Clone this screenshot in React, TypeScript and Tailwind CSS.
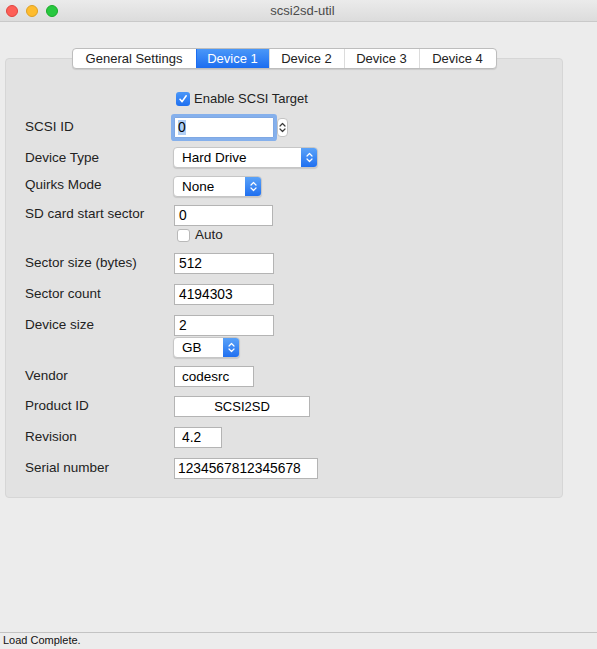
import React from "react";

const font = { fontFamily: '"Liberation Sans", Arial, sans-serif' };

function UpDown({ color = "white", className = "" }: { color?: string; className?: string }) {
  return (
    <svg width="7" height="11" viewBox="0 0 7 11" className={className} fill="none">
      <path d="M1 4 L3.5 1.5 L6 4" stroke={color} strokeWidth="1.2" strokeLinecap="round" strokeLinejoin="round" />
      <path d="M1 7 L3.5 9.5 L6 7" stroke={color} strokeWidth="1.2" strokeLinecap="round" strokeLinejoin="round" />
    </svg>
  );
}

function Check() {
  return (
    <svg width="10" height="10" viewBox="0 0 10 10" fill="none">
      <path d="M2 5.3 L4.1 7.6 L8.2 1.8" stroke="white" strokeWidth="1.6" strokeLinecap="round" strokeLinejoin="round" />
    </svg>
  );
}

function Label({ children, mt = "mt-[2px]" }: { children: React.ReactNode; mt?: string }) {
  return <div className={`w-[149px] shrink-0 text-[13.5px] leading-[16px] text-[#222] ${mt}`}>{children}</div>;
}

function TextBox({
  value,
  w,
  pl = "pl-[4px]",
  center = false,
  size = "text-[13px]",
}: {
  value: string;
  w: string;
  pl?: string;
  center?: boolean;
  size?: string;
}) {
  return (
    <div
      className={`${w} h-[21px] bg-white border border-[#b4b4b4] ${size} leading-[19px] text-black whitespace-nowrap overflow-hidden ${
        center ? "text-center" : pl
      }`}
    >
      {value}
    </div>
  );
}

function Select({ value, w }: { value: string; w: string }) {
  return (
    <div
      className={`${w} -ml-px h-[21px] flex rounded-[4px] bg-white border border-[#c6c6c6] shadow-[0_1px_1px_rgba(0,0,0,0.12)] overflow-hidden`}
    >
      <div className="flex-1 pl-[8px] text-[13.5px] leading-[19px] text-black">{value}</div>
      <div className="w-[16px] flex items-center justify-center bg-gradient-to-b from-[#5aa2f8] to-[#1f6ff0]">
        <UpDown />
      </div>
    </div>
  );
}

function Row({ label, mt, children, labelMt }: { label: string; mt: string; children: React.ReactNode; labelMt?: string }) {
  return (
    <div className={`flex items-start ${mt}`}>
      <Label mt={labelMt}>{label}</Label>
      <div className="flex flex-col">{children}</div>
    </div>
  );
}

const tabs = [
  { name: "General Settings", w: "w-[123px]" },
  { name: "Device 1", w: "w-[73px]", active: true },
  { name: "Device 2", w: "w-[75px]" },
  { name: "Device 3", w: "w-[75px]" },
  { name: "Device 4", w: "w-[77px]" },
];

const num = "text-[13.8px]";

export default function App() {
  return (
    <div className="w-[597px] h-[649px] flex flex-col bg-[#ececec] overflow-hidden" style={font}>
      {/* title bar */}
      <div className="h-[22px] shrink-0 flex items-center bg-gradient-to-b from-[#ebebeb] to-[#dcdcdc] border-b border-[#c9c9c9] relative">
        <div className="flex items-center gap-[8px] pl-[6px]">
          <div className="w-[12px] h-[12px] rounded-full bg-[#fd5f57] border border-[#e0443e]" />
          <div className="w-[12px] h-[12px] rounded-full bg-[#febc2e] border border-[#dea123]" />
          <div className="w-[12px] h-[12px] rounded-full bg-[#28c840] border border-[#1aab29]" />
        </div>
        <div className="flex-1 text-center pr-[50px] text-[13px] text-[#4a4a4a]">scsi2sd-util</div>
      </div>

      {/* main area */}
      <div className="flex-1 flex flex-col pt-[26px]">
        <div className="flex justify-center w-[558px] ml-[5px] relative z-10">
          <div className="flex h-[21px] rounded-[4px] border border-[#bdbdbd] bg-white shadow-[0_1px_1px_rgba(0,0,0,0.10)] overflow-hidden">
            {tabs.map((t, i) => (
              <div
                key={t.name}
                className={`${t.w} flex items-center justify-center text-[13px] ${
                  i > 0 ? "border-l border-[#dcdcdc]" : ""
                } ${t.active ? "bg-gradient-to-b from-[#4a97f8] to-[#1c6df0] text-white border-l-[#1c6df0]" : "text-[#222]"}`}
              >
                {t.name}
              </div>
            ))}
          </div>
        </div>

        <div className="w-[558px] ml-[5px] -mt-[11px] rounded-[4px] bg-[#e2e2e2] border border-[#d6d6d6] pl-[19px] pt-[33px] pb-[18px]">
          {/* enable checkbox */}
          <div className="flex items-center h-[14px] pl-[151px]">
            <div className="w-[14px] h-[14px] rounded-[3px] bg-gradient-to-b from-[#4b97f8] to-[#1d6ff0] flex items-center justify-center">
              <Check />
            </div>
            <span className="ml-[4px] text-[13px] text-[#222]">Enable SCSI Target</span>
          </div>

          <Row label="SCSI ID" mt="mt-[11px]">
            <div className="flex items-start">
              <div className="w-[100px] h-[21px] bg-white border border-[#7fa8e3] rounded-[1px] shadow-[0_0_0_3px_#85b0ec] pl-[3px] text-[13.8px] leading-[19px] text-black">
                <span className="bg-[#b1cff5]">0</span>
              </div>
              <div className="ml-[3px] mt-[1px] w-[11px] h-[19px] rounded-[4px] bg-white border border-[#c4c4c4] flex items-center justify-center">
                <UpDown color="#3a3a3a" />
              </div>
            </div>
          </Row>

          <Row label="Device Type" mt="mt-[9px]" labelMt="mt-[3px]">
            <Select value="Hard Drive" w="w-[145px]" />
          </Row>

          <Row label="Quirks Mode" mt="mt-[8px]" labelMt="mt-[1px]">
            <Select value="None" w="w-[89px]" />
          </Row>

          <Row label="SD card start sector" mt="mt-[8px]" labelMt="mt-[1px]">
            <TextBox value="0" w="w-[99px]" size={num} />
            <div className="flex items-center mt-[2px] ml-[3px] h-[14px]">
              <div className="w-[13px] h-[13px] rounded-[3px] bg-white border border-[#b9b9b9]" />
              <span className="ml-[5px] text-[13.5px] text-[#222]">Auto</span>
            </div>
          </Row>

          <Row label="Sector size (bytes)" mt="mt-[11px]">
            <TextBox value="512" w="w-[100px]" size={num} />
          </Row>

          <Row label="Sector count" mt="mt-[10px]">
            <TextBox value="4194303" w="w-[100px]" size={num} />
          </Row>

          <Row label="Device size" mt="mt-[10px]">
            <TextBox value="2" w="w-[100px]" size={num} />
            <div className="mt-[1px]">
              <Select value="GB" w="w-[67px]" />
            </div>
          </Row>

          <Row label="Vendor" mt="mt-[8px]">
            <TextBox value="codesrc" w="w-[80px]" pl="pl-[7px]" size="text-[13.5px]" />
          </Row>

          <Row label="Product ID" mt="mt-[9px]">
            <TextBox value="SCSI2SD" w="w-[136px]" center />
          </Row>

          <Row label="Revision" mt="mt-[10px]">
            <TextBox value="4.2" w="w-[48px]" pl="pl-[7px]" size={num} />
          </Row>

          <Row label="Serial number" mt="mt-[10px]">
            <TextBox value="1234567812345678" w="w-[144px]" pl="pl-[3px]" size={num} />
          </Row>
        </div>
      </div>

      {/* status bar */}
      <div className="h-[17px] shrink-0 border-t border-[#c3c3c3] bg-[#ececec] pl-[3px] text-[11px] leading-[15px] text-[#111]">
        Load Complete.
      </div>
    </div>
  );
}
